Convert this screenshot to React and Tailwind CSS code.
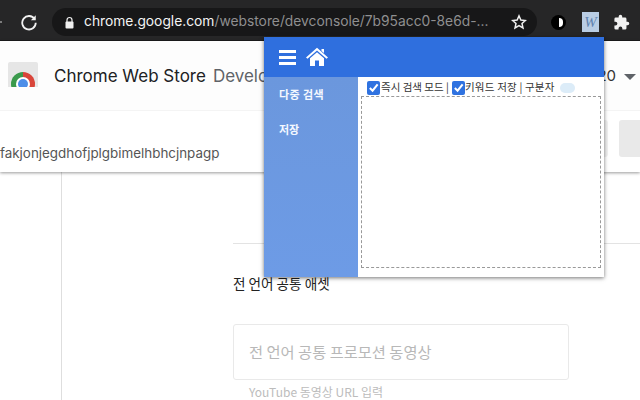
import React from "react";

const kr = { fontFamily: '"Noto Sans CJK KR", "Noto Sans", sans-serif' };

function Check() {
  return (
    <span className="flex h-[14px] w-[13px] shrink-0 items-center justify-center rounded-[2px] bg-[#2f72e0]">
      <svg width="11" height="11" viewBox="0 0 12 12" fill="none">
        <path d="M2 6.5 L5 9.5 L10.5 2.5" stroke="#ffffff" strokeWidth="2.2" />
      </svg>
    </span>
  );
}

function Toolbar() {
  return (
    <div className="flex h-[41px] shrink-0 flex-col bg-[#1b1b1c]">
      <div className="flex h-[40px] items-center bg-[#262627] pt-[4px]">
        <svg className="ml-[-6px] mr-[16px]" width="10" height="14" viewBox="0 0 10 14" fill="none">
          <path d="M1 7 L8 7" stroke="#9a9a9a" strokeWidth="1.6" />
        </svg>
        <svg width="18" height="18" viewBox="0 0 24 24" fill="none" stroke="#f2f2f2" strokeWidth="2.4">
          <path d="M19.5 8 A9 9 0 1 0 21 13" />
          <path d="M21 3 V9.5 H14.5" fill="#f2f2f2" stroke="none" />
        </svg>
        <div className="ml-[14px] flex h-[28px] w-[485px] items-center rounded-full bg-[#171718] pl-[12px]">
          <svg width="11" height="13" viewBox="0 0 11 13" fill="none">
            <path d="M3 6 V4 A2.5 2.5 0 0 1 8 4 V6" stroke="#f0f0f0" strokeWidth="1.2" />
            <rect x="1.5" y="5.5" width="8" height="7" rx="1" fill="#f0f0f0" />
          </svg>
          <span className="ml-[9px] whitespace-nowrap text-[13.8px] leading-none text-[#f4f4f4]" style={{ fontFamily: '"Inter", sans-serif' }}>
            chrome.google.com<span className="text-[#8f8f90]">/webstore/devconsole/7b95acc0-8e6d-...</span>
          </span>
          <svg className="ml-auto mr-[10px] shrink-0" width="16" height="16" viewBox="0 0 24 24" fill="none" stroke="#f0f0f0" strokeWidth="2.2">
            <path d="M12 2.8 L14.8 9 L21.5 9.7 L16.5 14.2 L18 21 L12 17.5 L6 21 L7.5 14.2 L2.5 9.7 L9.2 9 Z" />
          </svg>
        </div>
        <span className="ml-[14px] flex h-[15px] w-[15px] shrink-0 items-center justify-center rounded-full bg-black">
          <span className="ml-[5px] h-[9px] w-[4px] rounded-r-full bg-white" />
        </span>
        <span className="ml-[16px] flex h-[20px] w-[17px] shrink-0 items-center justify-center bg-[#b9cde4] text-[15px] italic leading-none text-[#5f83b0]" style={{ fontFamily: '"Liberation Serif", serif' }}>W</span>
        <svg className="ml-[14px] shrink-0" width="17" height="17" viewBox="0 0 24 24" fill="#f2f2f2">
          <path d="M20.5 11H19V7a2 2 0 0 0-2-2h-4V3.5a2.5 2.5 0 0 0-5 0V5H4a2 2 0 0 0-2 2v3.8h1.5a2.7 2.7 0 0 1 0 5.4H2V20a2 2 0 0 0 2 2h3.8v-1.5a2.7 2.7 0 0 1 5.4 0V22H17a2 2 0 0 0 2-2v-4h1.5a2.5 2.5 0 0 0 0-5z" />
        </svg>
      </div>
    </div>
  );
}

function Popup() {
  return (
    <div className="absolute left-[264px] top-[37px] z-20 flex h-[240px] w-[340px] flex-col bg-white shadow-[0_1px_4px_rgba(0,0,0,0.55)]" style={kr}>
      <div className="flex h-[40px] shrink-0 items-center bg-[#2f6fde] pl-[15px]">
        <div className="flex w-[17px] flex-col gap-[3px]">
          <span className="h-[3px] bg-white" />
          <span className="h-[3px] bg-white" />
          <span className="h-[3px] bg-white" />
        </div>
        <svg className="ml-[10px]" width="22" height="20" viewBox="0 0 22 20" fill="#ffffff">
          <path d="M15.5 2 H18 V6 L15.5 4 Z" />
          <path d="M11 0.8 L22 10.5 L20.5 11.8 L11 3.6 L1.5 11.8 L0 10.5 Z" />
          <path d="M4 11.2 L11 5.2 L18 11.2 V19 H13 V13.5 H9 V19 H4 Z" />
        </svg>
      </div>
      <div className="flex min-h-0 flex-1">
        <div className="flex w-[94px] shrink-0 flex-col gap-[19px] bg-gradient-to-b from-[#6b97dd] to-[#6d9be6] pl-[15px] pt-[9px] text-[11px] font-bold leading-[16px] text-[#f4f8ff]">
          <span className="tracking-[0.4px]">다중 검색</span>
          <span>저장</span>
        </div>
        <div className="flex flex-1 flex-col pl-[3px] pr-[3px] pb-[9px]">
          <div className="flex h-[19px] shrink-0 items-center pl-[6px] pt-[2px] text-[10.5px] leading-none text-[#333333]">
            <Check />
            <span className="w-[72px] shrink-0 whitespace-nowrap pl-px">즉시 검색 모드 |</span>
            <Check />
            <span className="whitespace-nowrap tracking-[0.2px]">키워드 저장 | 구분자</span>
            <span className="ml-[5px] h-[10px] w-[15px] rounded-full bg-[#dcecf8]" />
          </div>
          <div className="flex-1 border border-dashed border-[#999999]" />
        </div>
      </div>
    </div>
  );
}

export default function App() {
  return (
    <div className="relative h-[400px] w-[640px] overflow-hidden bg-white" style={kr}>
      <Toolbar />
      <div className="relative z-10 h-[131px] bg-white shadow-[0_1px_3px_rgba(0,0,0,0.4)]">
        <div className="flex h-[70px] items-center border-b border-[#f4f4f4] bg-[#fdfdfd] pl-[8px] pt-[2px]">
          <div className="relative mb-[4px] h-[25px] w-[30px] overflow-hidden rounded-t-[2px] bg-[#e6e6e6]">
            <span className="absolute left-[3px] top-[10px] h-[24px] w-[24px] rounded-full bg-[conic-gradient(#d9453a_0deg_120deg,#f4c20d_120deg_240deg,#3a9a4c_240deg_360deg)]" />
            <span className="absolute left-[10px] top-[17px] h-[10px] w-[10px] rounded-full bg-[#4d8ee8] ring-2 ring-white" />
          </div>
          <span className="ml-[16px] whitespace-nowrap text-[17px] text-[#202124]" style={{ fontFamily: '"Inter", sans-serif' }}>Chrome Web Store</span>
          <span className="ml-[7px] whitespace-nowrap text-[17px] text-[#5f6368]" style={{ fontFamily: '"Inter", sans-serif' }}>Developer</span>
          <span className="ml-auto flex items-center gap-[8px]">
            <span className="text-[15px] text-[#333333]" style={{ fontFamily: '"Inter", sans-serif' }}>20</span>
            <span className="mr-[4px] h-0 w-0 border-x-[6px] border-t-[6px] border-x-transparent border-t-[#5f6368]" />
          </span>
        </div>
        <div className="flex h-[61px] items-start justify-end overflow-hidden">
          <div className="mt-[9px] flex gap-[11px]">
            <span className="h-[37px] w-[30px] rounded-[3px] bg-[#f1f1f1]" />
            <span className="mr-[-12px] h-[37px] w-[33px] rounded-[3px] bg-[#e9e9e9]" />
          </div>
        </div>
        <span className="absolute left-0 top-[106px] whitespace-nowrap text-[13.4px] leading-none text-[#555555]" style={{ fontFamily: '"Inter", sans-serif' }}>fakjonjegdhofjplgbimelhbhcjnpagp</span>
      </div>
      <div className="flex h-[228px]">
        <div className="w-[62px] shrink-0 border-r border-[#dedede]" />
        <div className="flex-1 pl-[171px]">
          <div className="mt-[71px] border-t border-[#e3e3e3]" />
          <p className="mt-[30px] text-[13.6px] leading-[18px] text-[#222222]">전 언어 공통 애셋</p>
          <div className="mt-[32px] flex h-[56px] w-[336px] items-center rounded-[3px] border border-[#e9e9e9] pb-[2px] pl-[15px] text-[15.3px] text-[#b8b8b8]">
            전 언어 공통 프로모션 동영상
          </div>
          <p className="mt-[4px] pl-[16px] text-[12px] leading-[16px] text-[#bcbcbc]">YouTube 동영상 URL 입력</p>
        </div>
      </div>
      <Popup />
    </div>
  );
}
